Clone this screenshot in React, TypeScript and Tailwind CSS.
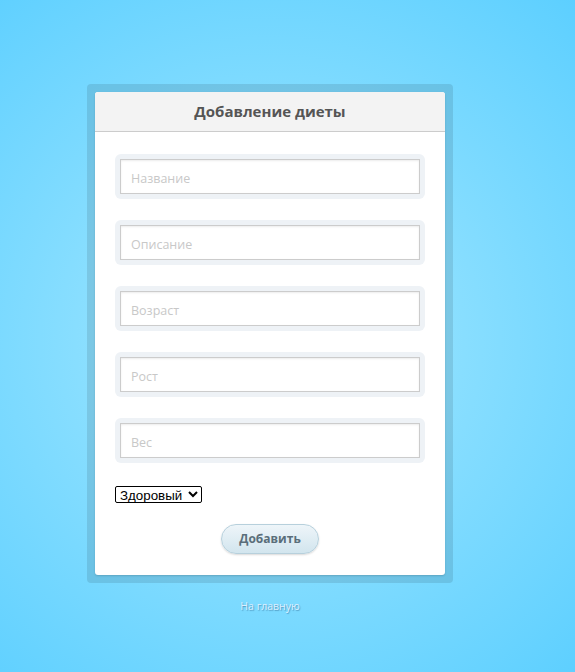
const fields = ["Название", "Описание", "Возраст", "Рост", "Вес"];

export default function App() {
  return (
    <div className="min-h-screen w-full bg-[radial-gradient(circle_at_270px_340px,#a8e9ff_0px,#5ccfff_460px)] pt-[84px] font-['Open_Sans',sans-serif]">
      <div className="ml-[87px] w-[366px] rounded-[4px] bg-black/10 p-[8px]">
        <div className="overflow-hidden rounded-[3px] bg-white shadow-[0_1px_2px_rgba(0,0,0,0.15)]">
          <div className="flex h-[40px] items-center justify-center border-b border-[#cccccc] bg-[#f3f3f3]">
            <h1 className="text-[15px] font-bold text-[#555555]">Добавление диеты</h1>
          </div>

          <form className="flex flex-col px-[20px] pt-[22px] pb-[21px]">
            <div className="flex flex-col gap-[21px]">
              {fields.map((f) => (
                <div key={f} className="rounded-[6px] bg-[#eef2f6] p-[5px]">
                  <input
                    type="text"
                    placeholder={f}
                    className="block h-[35px] w-full border border-[#cccccc] bg-white px-[10px] pt-[4px] text-[12.5px] text-[#555] shadow-[inset_0_1px_2px_rgba(0,0,0,0.08)] outline-none placeholder:text-[#c8c8c8]"
                  />
                </div>
              ))}
            </div>

            <select className="mt-[23px] block h-[17px] w-[87px] rounded-[2px] border border-black bg-white font-['Liberation_Sans',Arial,sans-serif] text-[13.33px] leading-none text-black">
              <option>Здоровый</option>
              <option>Больной</option>
            </select>

            <div className="mt-[21px] flex justify-center">
              <button
                type="button"
                className="h-[30px] w-[98px] rounded-full border border-[#b7d0dc] bg-[linear-gradient(#eef5f9,#d2e5ee)] text-[12px] font-bold text-[#5a6e7a] shadow-[0_1px_2px_rgba(0,0,0,0.15)]"
              >
                Добавить
              </button>
            </div>
          </form>
        </div>
      </div>

      <div className="ml-[87px] mt-[18px] w-[366px] text-center text-[10.5px] leading-none">
        <a href="#" className="text-[#dcefff] [text-shadow:1px_1px_1px_rgba(0,40,80,0.35)]">
          На главную
        </a>
      </div>
    </div>
  );
}
